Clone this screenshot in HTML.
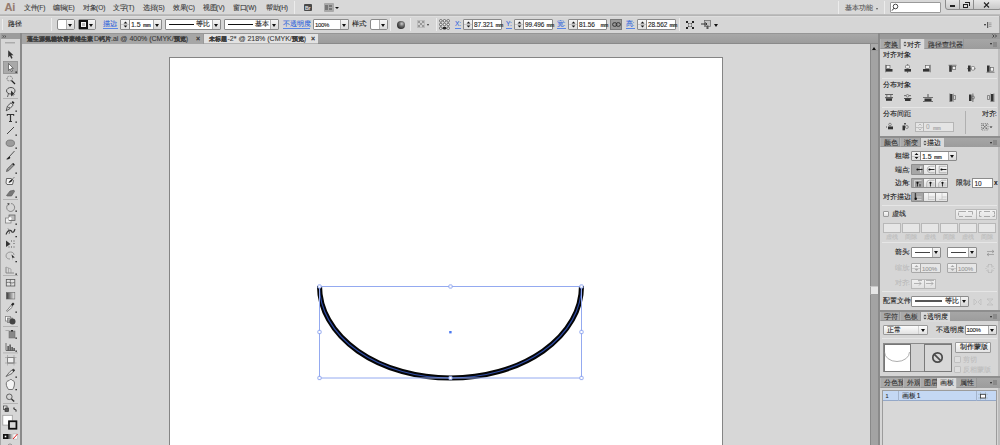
<!DOCTYPE html>
<html><head><meta charset="utf-8">
<style>
*{margin:0;padding:0;box-sizing:border-box}
html,body{width:1000px;height:445px;overflow:hidden;background:#d6d6d6;font-family:"Liberation Sans",sans-serif;font-size:8px;color:#333}
.a{position:absolute}
.t{position:absolute;white-space:nowrap;line-height:10px;font-size:6.5px;font-weight:normal;-webkit-text-stroke:0.1px currentColor}
.sep{position:absolute;width:1px;background:#b8b8b8;border-right:1px solid #ececec}
.box{position:absolute;background:#fff;border:1px solid #8c8c8c}
.dd{position:absolute;border:1px solid #8c8c8c;background:#fff}
.dd .ar{position:absolute;right:0;top:0;bottom:0;width:8px;border-left:1px solid #aaa;background:linear-gradient(#f4f4f4,#d8d8d8)}
.dd .ar:after{content:"";position:absolute;left:2px;top:3px;border-left:2px solid transparent;border-right:2px solid transparent;border-top:3px solid #111}
.sp{position:absolute;border:1px solid #8c8c8c;background:#fff}
.sp .ud{position:absolute;left:0;top:0;bottom:0;width:9px;border-right:1px solid #aaa;background:linear-gradient(#f4f4f4,#dcdcdc)}
.sp .ud:before{content:"";position:absolute;left:2px;top:1px;border-left:2px solid transparent;border-right:2px solid transparent;border-bottom:3px solid #222}
.sp .ud:after{content:"";position:absolute;left:2px;bottom:1px;border-left:2px solid transparent;border-right:2px solid transparent;border-top:3px solid #222}
.blue{color:#3468dc}
.tab{position:absolute;top:0;height:100%;background:#a8a8a8;border-right:1px solid #8f8f8f;color:#333}
.tabA{background:#d6d6d6}
</style></head><body>

<!-- MENU BAR -->
<div class="a" style="left:0;top:0;width:1000px;height:15px;background:#d8d8d8;border-bottom:1px solid #bdbdbd"></div>


<!-- MENU CONTENT -->
<div class="t" style="left:4.5px;top:1px;font-size:11px;line-height:13px;font-weight:bold;color:#957b6f;letter-spacing:-0.3px">Ai</div>
<div class="t" style="left:24px;top:3px;font-weight:normal;color:#3c3c3c"><span style="display:inline-block;width:2em">文件</span>(F)</div>
<div class="t" style="left:53px;top:3px;font-weight:normal;color:#3c3c3c"><span style="display:inline-block;width:2em">编辑</span>(E)</div>
<div class="t" style="left:83px;top:3px;font-weight:normal;color:#3c3c3c"><span style="display:inline-block;width:2em">对象</span>(O)</div>
<div class="t" style="left:113px;top:3px;font-weight:normal;color:#3c3c3c"><span style="display:inline-block;width:2em">文字</span>(T)</div>
<div class="t" style="left:143px;top:3px;font-weight:normal;color:#3c3c3c"><span style="display:inline-block;width:2em">选择</span>(S)</div>
<div class="t" style="left:173px;top:3px;font-weight:normal;color:#3c3c3c"><span style="display:inline-block;width:2em">效果</span>(C)</div>
<div class="t" style="left:203px;top:3px;font-weight:normal;color:#3c3c3c"><span style="display:inline-block;width:2em">视图</span>(V)</div>
<div class="t" style="left:233px;top:3px;font-weight:normal;color:#3c3c3c"><span style="display:inline-block;width:2em">窗口</span>(W)</div>
<div class="t" style="left:266px;top:3px;font-weight:normal;color:#3c3c3c"><span style="display:inline-block;width:2em">帮助</span>(H)</div>
<div class="sep" style="left:294px;top:1px;height:13px"></div>
<div class="a" style="left:304px;top:4px;width:8px;height:7px;background:#4a4a4a;border-radius:1px"></div>
<div class="t" style="left:305px;top:3px;font-size:5px;color:#ddd;font-weight:bold">Br</div>
<div class="a" style="left:324px;top:3px;width:10px;height:9px;background:#a9a9a9;border-radius:1px"></div>
<div class="a" style="left:325px;top:5px;width:3px;height:5px;background:#777"></div>
<div class="a" style="left:329px;top:5px;width:3px;height:2px;background:#777"></div>
<div class="a" style="left:329px;top:8px;width:3px;height:2px;background:#777"></div>
<div class="a" style="left:335px;top:7px;border-left:2px solid transparent;border-right:2px solid transparent;border-top:2px solid #111"></div>
<div class="sep" style="left:838px;top:1px;height:13px"></div>
<div class="t" style="left:845px;top:3px;color:#555;font-weight:normal"><span style="display:inline-block;width:4em">基本功能</span></div>
<div class="a" style="left:875.5px;top:7.5px;border-left:1.5px solid transparent;border-right:1.5px solid transparent;border-top:2px solid #555"></div>
<div class="sep" style="left:884px;top:1px;height:13px"></div>
<div class="box" style="left:890px;top:2px;width:51px;height:11px;border-color:#9a9a9a;border-radius:1px"></div>
<svg class="a" style="left:891px;top:3px" width="8" height="9" viewBox="0 0 8 9"><circle cx="4.5" cy="3.5" r="2.3" fill="none" stroke="#333" stroke-width="0.9"/><line x1="3" y1="5.2" x2="1" y2="7.6" stroke="#333" stroke-width="1"/></svg>
<div class="a" style="left:945px;top:-1px;width:56px;height:11px;background:linear-gradient(#e6e6e6,#c9c9c9);border:1px solid #8c8c8c;border-radius:0 0 2px 3px"></div>
<div class="a" style="left:959px;top:0;width:1px;height:10px;background:#8c8c8c"></div>
<div class="a" style="left:973px;top:0;width:1px;height:10px;background:#8c8c8c"></div>
<div class="a" style="left:950px;top:5px;width:5px;height:2px;background:#222"></div>
<div class="a" style="left:963px;top:4px;width:5px;height:4px;border:1px solid #222;background:#ddd"></div>
<div class="a" style="left:965px;top:2px;width:5px;height:4px;border:1px solid #222;border-bottom:none;border-left:none"></div>
<svg class="a" style="left:983px;top:2px" width="7" height="6"><path d="M1 0.5L6 5.5M6 0.5L1 5.5" stroke="#222" stroke-width="1.1"/></svg>

<!-- CONTROL BAR -->
<div class="a" style="left:0;top:15px;width:1000px;height:18px;background:#d6d6d6;border-top:1px solid #f0f0f0"></div>


<!-- CONTROL CONTENT -->
<div class="a" style="left:0;top:15px;width:1000px;height:1px;background:#b4b4b4"></div>
<div class="a" style="left:0;top:16px;width:1000px;height:1px;background:#dedede"></div>
<div class="sep" style="left:2px;top:19px;height:11px"></div>
<div class="t" style="left:8px;top:19px;color:#222"><span style="display:inline-block;width:2em">路径</span></div>
<div class="sep" style="left:51px;top:18px;height:13px"></div>
<div class="a" style="left:57px;top:19px;width:18px;height:11px;background:#fff;border:1px solid #8a8a8a;border-radius:2px"></div>
<div class="a" style="left:66px;top:20px;width:8px;height:9px;background:linear-gradient(#f6f6f6,#dadada);border-left:1px solid #b0b0b0"></div>
<div class="a" style="left:68px;top:23.5px;border-left:2px solid transparent;border-right:2px solid transparent;border-top:3px solid #111"></div>

<div class="a" style="left:78px;top:19px;width:18px;height:11px;background:#c8c8c8;border:1px solid #8a8a8a;border-radius:2px"></div>
<div class="a" style="left:87px;top:20px;width:8px;height:9px;background:linear-gradient(#f6f6f6,#dadada);border-left:1px solid #b0b0b0"></div>
<div class="a" style="left:89px;top:23.5px;border-left:2px solid transparent;border-right:2px solid transparent;border-top:3px solid #111"></div>
<div class="a" style="left:79px;top:20px;width:9px;height:9px;background:#111"></div><div class="a" style="left:81px;top:22px;width:5px;height:5px;border:1px solid #f4f4f4;background:#b8b8b8"></div>
<div class="t blue" style="left:102.5px;top:19px;"><span style="display:inline-block;width:2em">描边</span>:</div><div class="a" style="left:102.5px;top:28px;width:15px;height:0.8px;background:#5a86e8"></div>
<div class="a" style="left:120px;top:19px;width:42px;height:11px;background:#fff;border:1px solid #8a8a8a;border-radius:1px"></div>
<div class="a" style="left:121px;top:20px;width:9px;height:9px;background:linear-gradient(#f4f4f4,#e0e0e0);border-right:1px solid #8a8a8a"></div>
<div class="a" style="left:121px;top:24.0px;width:8px;height:1px;background:#c8c8c8"></div>
<svg class="a" style="left:121px;top:20px" width="9" height="9"><path d="M2.6 3.5L4.5 1.5L6.4 3.5Z M2.6 5.5L4.5 7.5L6.4 5.5Z" fill="#111"/></svg>
<div class="a" style="left:153px;top:20px;width:8px;height:9px;background:linear-gradient(#f4f4f4,#d8d8d8);border-left:1px solid #aaa"></div>
<div class="a" style="left:155px;top:23.5px;border-left:2px solid transparent;border-right:2px solid transparent;border-top:3px solid #111"></div>
<div class="t" style="left:131px;top:20.3px;color:#222;font-weight:normal;font-size:7px;letter-spacing:-0.1px">1.5</div>
<div class="t" style="left:143px;top:21px;color:#333;font-size:4.6px;font-weight:bold;letter-spacing:-0.45px">mm</div>
<div class="a" style="left:165px;top:19px;width:56px;height:11px;background:#fff;border:1px solid #8a8a8a;border-radius:1px"></div>
<div class="a" style="left:212px;top:20px;width:8px;height:9px;background:linear-gradient(#f6f6f6,#dadada);border-left:1px solid #b0b0b0"></div>
<div class="a" style="left:214px;top:23.5px;border-left:2px solid transparent;border-right:2px solid transparent;border-top:3px solid #111"></div>
<div class="a" style="left:169px;top:23.5px;width:25px;height:1.5px;background:#111"></div><div class="t" style="left:196px;top:19px;color:#222"><span style="display:inline-block;width:2em">等比</span></div>
<div class="a" style="left:224px;top:19px;width:55px;height:11px;background:#fff;border:1px solid #8a8a8a;border-radius:1px"></div>
<div class="a" style="left:270px;top:20px;width:8px;height:9px;background:linear-gradient(#f6f6f6,#dadada);border-left:1px solid #b0b0b0"></div>
<div class="a" style="left:272px;top:23.5px;border-left:2px solid transparent;border-right:2px solid transparent;border-top:3px solid #111"></div>
<div class="a" style="left:228px;top:23.5px;width:25px;height:1.5px;background:#111"></div><div class="t" style="left:255px;top:19px;color:#222"><span style="display:inline-block;width:2em">基本</span></div>
<div class="t blue" style="left:283px;top:19px;"><span style="display:inline-block;width:4em">不透明度</span>:</div><div class="a" style="left:283px;top:28px;width:27px;height:0.8px;background:#5a86e8"></div>
<div class="a" style="left:313px;top:19px;width:36px;height:11px;background:#fff;border:1px solid #8a8a8a;border-radius:1px"></div>
<div class="a" style="left:340px;top:20px;width:8px;height:9px;background:linear-gradient(#f6f6f6,#dadada);border-left:1px solid #b0b0b0"></div>
<div class="a" style="left:342px;top:23.5px;border-left:2px solid transparent;border-right:2px solid transparent;border-top:3px solid #111"></div>
<div class="t" style="left:315px;top:19.5px;color:#222;font-size:6px;font-weight:normal;letter-spacing:-0.3px">100%</div>
<div class="t" style="left:352px;top:19px;color:#222"><span style="display:inline-block;width:2em">样式</span>:</div>
<div class="a" style="left:370px;top:19px;width:18px;height:11px;background:#fff;border:1px solid #8a8a8a;border-radius:2px"></div>
<div class="a" style="left:379px;top:20px;width:8px;height:9px;background:linear-gradient(#f6f6f6,#dadada);border-left:1px solid #b0b0b0"></div>
<div class="a" style="left:381px;top:23.5px;border-left:2px solid transparent;border-right:2px solid transparent;border-top:3px solid #111"></div>

<div class="sep" style="left:390px;top:18px;height:13px"></div>
<div class="a" style="left:397px;top:20.5px;width:8px;height:8px;border-radius:50%;background:radial-gradient(circle at 60% 35%,#cfcfcf 0,#6a6a6a 35%,#111 90%)"></div>
<div class="sep" style="left:410px;top:18px;height:13px"></div>
<svg class="a" style="left:417px;top:20px" width="8" height="8" viewBox="0 0 8 8"><rect x="0.5" y="0.5" width="7" height="7" fill="#d0d0d0" stroke="#888" stroke-width="0.6" stroke-dasharray="1 1"/><rect x="1" y="1" width="2" height="2" fill="#999"/><rect x="5" y="1" width="2" height="2" fill="#999"/><rect x="3" y="3" width="2" height="2" fill="#999"/><rect x="1" y="5" width="2" height="2" fill="#999"/><rect x="5" y="5" width="2" height="2" fill="#999"/></svg>
<div class="a" style="left:426.5px;top:24px;border-left:1.5px solid transparent;border-right:1.5px solid transparent;border-top:2px solid #333"></div>
<div class="sep" style="left:436px;top:18px;height:13px"></div>
<svg class="a" style="left:439px;top:19px" width="11" height="11" viewBox="0 0 11 11"><g fill="#f0f0f0" stroke="#444" stroke-width="0.7"><circle cx="1.8" cy="1.8" r="1.3"/><circle cx="5.5" cy="1.8" r="1.3"/><circle cx="9.2" cy="1.8" r="1.3"/><circle cx="1.8" cy="5.5" r="1.3"/><circle cx="5.5" cy="5.5" r="1.3"/><circle cx="9.2" cy="5.5" r="1.3"/><circle cx="1.8" cy="9.2" r="1.3"/><circle cx="9.2" cy="9.2" r="1.3"/></g><path d="M3.1 1.8H4.2M6.8 1.8H7.9M3.1 9.2H4.2M6.8 9.2H7.9M1.8 3.1V4.2M1.8 6.8V7.9M9.2 3.1V4.2M9.2 6.8V7.9" stroke="#666" stroke-width="0.5"/><ellipse cx="5.5" cy="9.2" rx="1.8" ry="1.4" fill="#222"/></svg>
<div class="t blue" style="left:455px;top:19px;">X:</div><div class="a" style="left:455px;top:28px;width:6px;height:0.8px;background:#5a86e8"></div>
<div class="a" style="left:463px;top:19px;width:39px;height:11px;background:#fff;border:1px solid #8a8a8a;border-radius:1px"></div>
<div class="a" style="left:464px;top:20px;width:9px;height:9px;background:linear-gradient(#f4f4f4,#e0e0e0);border-right:1px solid #8a8a8a"></div>
<div class="a" style="left:464px;top:24.0px;width:8px;height:1px;background:#c8c8c8"></div>
<svg class="a" style="left:464px;top:20px" width="9" height="9"><path d="M2.6 3.5L4.5 1.5L6.4 3.5Z M2.6 5.5L4.5 7.5L6.4 5.5Z" fill="#111"/></svg>
<div class="t" style="left:474px;top:20.3px;color:#222;font-weight:normal;font-size:6.5px;letter-spacing:-0.1px">87.321</div>
<div class="t" style="left:495.5px;top:21px;color:#333;font-size:4.6px;font-weight:bold;letter-spacing:-0.45px">mm</div>
<div class="t blue" style="left:506px;top:19px;">Y:</div><div class="a" style="left:506px;top:28px;width:6px;height:0.8px;background:#5a86e8"></div>
<div class="a" style="left:514px;top:19px;width:39px;height:11px;background:#fff;border:1px solid #8a8a8a;border-radius:1px"></div>
<div class="a" style="left:515px;top:20px;width:9px;height:9px;background:linear-gradient(#f4f4f4,#e0e0e0);border-right:1px solid #8a8a8a"></div>
<div class="a" style="left:515px;top:24.0px;width:8px;height:1px;background:#c8c8c8"></div>
<svg class="a" style="left:515px;top:20px" width="9" height="9"><path d="M2.6 3.5L4.5 1.5L6.4 3.5Z M2.6 5.5L4.5 7.5L6.4 5.5Z" fill="#111"/></svg>
<div class="t" style="left:525px;top:20.3px;color:#222;font-weight:normal;font-size:6.5px;letter-spacing:-0.1px">99.496</div>
<div class="t" style="left:546.5px;top:21px;color:#333;font-size:4.6px;font-weight:bold;letter-spacing:-0.45px">mm</div>
<div class="t blue" style="left:557px;top:19px;"><span style="display:inline-block;width:1em">宽</span>:</div><div class="a" style="left:557px;top:28px;width:9px;height:0.8px;background:#5a86e8"></div>
<div class="a" style="left:568px;top:19px;width:39px;height:11px;background:#fff;border:1px solid #8a8a8a;border-radius:1px"></div>
<div class="a" style="left:569px;top:20px;width:9px;height:9px;background:linear-gradient(#f4f4f4,#e0e0e0);border-right:1px solid #8a8a8a"></div>
<div class="a" style="left:569px;top:24.0px;width:8px;height:1px;background:#c8c8c8"></div>
<svg class="a" style="left:569px;top:20px" width="9" height="9"><path d="M2.6 3.5L4.5 1.5L6.4 3.5Z M2.6 5.5L4.5 7.5L6.4 5.5Z" fill="#111"/></svg>
<div class="t" style="left:579px;top:20.3px;color:#222;font-weight:normal;font-size:6.5px;letter-spacing:-0.1px">81.56</div>
<div class="t" style="left:600.5px;top:21px;color:#333;font-size:4.6px;font-weight:bold;letter-spacing:-0.45px">mm</div>
<div class="a" style="left:610px;top:19px;width:12px;height:11px;background:#9a9a9a;border:1px solid #7a7a7a"></div>
<svg class="a" style="left:611.5px;top:22px" width="9" height="5" viewBox="0 0 9 5"><rect x="0.6" y="0.7" width="4.2" height="3.6" rx="1.8" fill="none" stroke="#333" stroke-width="1"/><rect x="4.2" y="0.7" width="4.2" height="3.6" rx="1.8" fill="none" stroke="#333" stroke-width="1"/></svg>
<div class="t blue" style="left:626px;top:19px;"><span style="display:inline-block;width:1em">高</span>:</div><div class="a" style="left:626px;top:28px;width:9px;height:0.8px;background:#5a86e8"></div>
<div class="a" style="left:637px;top:19px;width:39px;height:11px;background:#fff;border:1px solid #8a8a8a;border-radius:1px"></div>
<div class="a" style="left:638px;top:20px;width:9px;height:9px;background:linear-gradient(#f4f4f4,#e0e0e0);border-right:1px solid #8a8a8a"></div>
<div class="a" style="left:638px;top:24.0px;width:8px;height:1px;background:#c8c8c8"></div>
<svg class="a" style="left:638px;top:20px" width="9" height="9"><path d="M2.6 3.5L4.5 1.5L6.4 3.5Z M2.6 5.5L4.5 7.5L6.4 5.5Z" fill="#111"/></svg>
<div class="t" style="left:648px;top:20.3px;color:#222;font-weight:normal;font-size:6.5px;letter-spacing:-0.1px">28.562</div>
<div class="t" style="left:669.5px;top:21px;color:#333;font-size:4.6px;font-weight:bold;letter-spacing:-0.45px">mm</div>
<div class="sep" style="left:679px;top:18px;height:13px"></div>
<svg class="a" style="left:685.5px;top:20.5px" width="8" height="8" viewBox="0 0 8 8"><g stroke="#222" stroke-width="0.9" fill="none"><path d="M1.5 1.5L2.8 2.8M6.5 1.5L5.2 2.8M1.5 6.5L2.8 5.2M6.5 6.5L5.2 5.2"/><path d="M2.5 2.5H5.5V5.5H2.5Z" stroke-width="0.6" stroke="#666"/></g><g fill="#222"><rect x="0" y="0" width="2" height="2"/><rect x="6" y="0" width="2" height="2"/><rect x="0" y="6" width="2" height="2"/><rect x="6" y="6" width="2" height="2"/></g></svg>
<svg class="a" style="left:701px;top:20px" width="10" height="9" viewBox="0 0 10 9"><rect x="3.5" y="0.5" width="6" height="6" fill="#c4c4c4" stroke="#666" stroke-width="0.7"/><path d="M0 4H5.5M4.3 2.6L6 4L4.3 5.4" stroke="#222" stroke-width="0.9" fill="none"/><rect x="5.5" y="5.5" width="2" height="3.5" fill="#555"/></svg>
<div class="a" style="left:714px;top:23.5px;border-left:2px solid transparent;border-right:2px solid transparent;border-top:3px solid #111"></div>
<div class="a" style="left:984px;top:24px;border-left:1.5px solid transparent;border-right:1.5px solid transparent;border-top:2px solid #222"></div>
<svg class="a" style="left:987px;top:22px" width="5" height="6" viewBox="0 0 5 6"><path d="M0.7 0V6" stroke="#444" stroke-width="1"/><g stroke="#888" stroke-width="0.7"><path d="M2 1H4.5M2 2.7H4.5M2 4.4H4.5"/></g></svg>
<div class="a" style="left:999px;top:16px;width:1px;height:17px;background:#a8a8a8"></div>

<!-- TOOLS PANEL -->
<div class="a" style="left:0;top:33px;width:20px;height:412px;background:#d6d6d6"></div>
<div class="a" style="left:0;top:33px;width:20px;height:6px;background:#9c9c9c"></div>
<div class="a" style="left:20px;top:33px;width:2px;height:412px;background:#8a8a8a"></div>


<!-- TOOL ICONS -->
<svg class="a" style="left:0;top:0" width="22" height="445" viewBox="0 0 22 445">
<rect x="0" y="33" width="1" height="412" fill="#a8a8a8"/>
<path d="M2.5 35.5L4 36.5L2.5 37.5M4.5 35.5L6 36.5L4.5 37.5" fill="none" stroke="#333" stroke-width="0.6"/>
<rect x="5" y="42" width="10" height="1.5" fill="#ababab"/>
<!-- selection -->
<path d="M8.2 50.3V57.5L9.9 55.8L11.3 58.7L12.6 58L11.2 55.2H13.5Z" fill="#333"/>
<!-- direct sel active bg -->
<rect x="3.5" y="61.5" width="14" height="12" fill="#a9a9a9" stroke="#8e8e8e" stroke-width="0.8"/>
<path d="M8.5 63.5V70.5L10.1 68.9L11.4 71.6L12.5 71L11.2 68.4H13.3Z" fill="#fff" stroke="#333" stroke-width="0.6"/>
<rect x="15.5" y="71.5" width="1.3" height="1.3" fill="#111"/>
<!-- magic wand -->
<g fill="none" stroke="#666" stroke-width="0.8"><path d="M7 77.5L9 76L11.5 76.5L12.5 78.5L11.5 80.5L9 81L7 80Z" stroke-dasharray="1 0.7"/></g>
<path d="M11.5 80.5L15 84" stroke="#222" stroke-width="1.3"/>
<!-- lasso -->
<path d="M6.5 91C6.5 88.5 9 87.5 11 87.5C13.5 87.5 15 89 15 91C15 93 13 94 11 94C9 94 6.5 93 6.5 91Z" fill="none" stroke="#444" stroke-width="0.9"/>
<path d="M11 90.5V96.5L12.3 95.2L14 96.5L12.7 94.5H15Z" fill="#333"/>
<path d="M8.5 93.5L7.5 97" stroke="#444" stroke-width="0.8"/>
<rect x="3" y="98" width="15" height="0.8" fill="#aaa"/>
<!-- pen -->
<path d="M6.2 110.8L7.5 106L11 102.8L13.2 105L10 108.5Z" fill="#ddd" stroke="#333" stroke-width="0.8"/>
<path d="M11.5 102.2L12.8 101L14.5 102.7L13.3 104Z" fill="#222"/>
<circle cx="9" cy="107.5" r="0.7" fill="#333"/>
<!-- type -->
<path d="M7 114.5H14M10.5 114.5V121.5M9 121.5H12" stroke="#333" stroke-width="1.2" fill="none"/>
<rect x="6.8" y="114" width="0.9" height="2" fill="#333"/><rect x="13.3" y="114" width="0.9" height="2" fill="#333"/>
<!-- line -->
<path d="M7 134L14 127" stroke="#333" stroke-width="0.9"/>
<!-- ellipse -->
<ellipse cx="10.3" cy="143.2" rx="4.2" ry="3.2" fill="#9c9c9c" stroke="#666" stroke-width="0.7"/>
<!-- brush -->
<path d="M14.5 151L9 157" stroke="#333" stroke-width="0.8"/>
<path d="M6 159.3C7 158.8 8 157 9.5 156.5C10.5 157 10.5 158 9.5 158.8C8.5 159.5 7 159.6 6 159.3Z" fill="#222"/>
<!-- pencil -->
<path d="M6.5 171.5L7.2 169L12.5 163.8L14 165.3L8.8 170.6Z" fill="#999" stroke="#444" stroke-width="0.7"/>
<path d="M12.2 164L13.3 163L14.8 164.5L13.8 165.5Z" fill="#222"/>
<!-- blob brush -->
<path d="M6.5 178.5H11L13.5 180.5L12.5 184.5H7L6 183Z" fill="#f2f2f2" stroke="#444" stroke-width="0.8"/>
<path d="M8.5 182.5C9 181 11 179.5 12.5 179C12.8 180.5 11.5 182 9.5 182.8Z" fill="#222"/>
<path d="M12.5 179L14.5 177" stroke="#444" stroke-width="0.6"/>
<!-- eraser -->
<path d="M6.5 195.5L10 191L14 190.2L14.5 191.5L11.5 196H7Z" fill="#777" stroke="#555" stroke-width="0.6"/>
<rect x="3" y="199" width="15" height="0.8" fill="#aaa"/>
<!-- rotate -->
<path d="M8 204.5A4 4 0 1 0 11 203.5" fill="none" stroke="#888" stroke-width="1"/>
<path d="M7 203.5L9.5 203L9 205.5Z" fill="#444"/>
<!-- scale -->
<rect x="5.5" y="218" width="5.5" height="5" fill="#eee" stroke="#777" stroke-width="0.7"/>
<rect x="9" y="215" width="6" height="5.5" fill="#bbb" stroke="#555" stroke-width="0.7"/>
<circle cx="10" cy="218.5" r="1.5" fill="#fff"/>
<!-- warp -->
<path d="M6 234.5C7 232 9 230 11 230.5C12 231 11.5 233 13.5 232C14.5 231 15 229 15 229" fill="none" stroke="#333" stroke-width="1.1"/>
<path d="M8 228.5L10 231L9 234" fill="none" stroke="#555" stroke-width="0.8"/>
<!-- free transform -->
<path d="M6 240.5L10.5 244L6 247Z" fill="#333"/>
<g fill="#555"><rect x="11" y="240.5" width="1" height="1"/><rect x="13.5" y="240.5" width="1" height="1"/><rect x="13.5" y="243" width="1" height="1"/><rect x="8.5" y="246.5" width="1" height="1"/><rect x="11" y="246.5" width="1" height="1"/><rect x="13.5" y="246.5" width="1" height="1"/></g>
<!-- shape builder -->
<path d="M6 256C6 253.5 8 252 10.5 252C13 252 14 253.5 14 255" fill="none" stroke="#888" stroke-width="0.8"/>
<path d="M6 256C6 258 8 259 10 259" fill="none" stroke="#888" stroke-width="0.8"/>
<path d="M11.5 254.5L14.8 257.5L12.5 257.8L13 260.8Z" fill="#222"/>
<!-- perspective -->
<path d="M6 267V273H14" fill="none" stroke="#777" stroke-width="0.8"/>
<path d="M6 267L11 269V273M8.5 268V273" fill="none" stroke="#999" stroke-width="0.7"/>
<rect x="3" y="275" width="15" height="0.8" fill="#aaa"/>
<!-- mesh -->
<rect x="6.3" y="279.5" width="8.5" height="6.5" fill="#e0e0e0" stroke="#555" stroke-width="0.8"/>
<path d="M6.5 282.5C9 281.5 11 284 14.5 282.5M10.5 279.5C9.5 282 11.5 284 10.5 286" fill="none" stroke="#555" stroke-width="0.7"/>
<!-- gradient -->
<defs><linearGradient id="gr" x1="0" x2="1"><stop offset="0" stop-color="#333"/><stop offset="1" stop-color="#eee"/></linearGradient></defs>
<rect x="6.3" y="292.5" width="8.5" height="6.5" fill="url(#gr)" stroke="#666" stroke-width="0.6"/>
<!-- eyedropper -->
<path d="M6.5 311L11 305.5L12.5 307L7.3 311.5Z" fill="#eee" stroke="#444" stroke-width="0.6"/>
<path d="M11 304.5L13 302.5L14.5 304L12.5 306Z" fill="#222"/>
<!-- blend -->
<rect x="5.5" y="316.5" width="5" height="4.5" fill="#fff" stroke="#777" stroke-width="0.7"/>
<rect x="7.5" y="318" width="5" height="4.5" fill="#aaa" stroke="#777" stroke-width="0.7"/>
<circle cx="12.5" cy="321.5" r="3" fill="#444"/>
<rect x="3" y="326" width="15" height="0.8" fill="#aaa"/>
<!-- symbol sprayer -->
<rect x="9" y="331" width="6" height="7" fill="#888" stroke="#666" stroke-width="0.5"/>
<rect x="11" y="330" width="2" height="1.5" fill="#333"/>
<path d="M5.5 330.5H9" stroke="#aaa" stroke-width="1"/>
<!-- graph -->
<path d="M6 343V350.5H15" fill="none" stroke="#444" stroke-width="0.7"/>
<g fill="#333"><rect x="7.5" y="346" width="1.2" height="4.5"/><rect x="9.5" y="344.5" width="1.2" height="6"/><rect x="11.5" y="347" width="1.2" height="3.5"/><rect x="13.5" y="348" width="1.2" height="2.5"/></g>
<rect x="3" y="352.5" width="15" height="0.8" fill="#aaa"/>
<!-- artboard -->
<rect x="7.5" y="357.5" width="6.5" height="5.5" fill="#eee" stroke="#444" stroke-width="0.8"/>
<path d="M5 357.5H16.5M5 363H16.5M7.5 355V365.5M14 355V365.5" stroke="#999" stroke-width="0.6"/>
<!-- slice -->
<path d="M6 376.5L10 371.5L13.5 369L14.5 370L12 373.5Z" fill="#ddd" stroke="#444" stroke-width="0.7"/>
<path d="M12 370L13.5 369L15 370.5L13.5 372Z" fill="#333"/>
<!-- hand -->
<path d="M7 387C6 385 6 382.5 7 381.5C8 380.5 9 381 9.5 380C10.5 379 12 379.5 12.5 380.5C13.5 380.5 14.5 381.5 14.5 383C14.5 386 13.5 388.5 12.5 389.5H8.5Z" fill="#f4f4f4" stroke="#555" stroke-width="0.8"/>
<!-- zoom -->
<circle cx="9.3" cy="396.8" r="2.8" fill="none" stroke="#555" stroke-width="0.9"/>
<path d="M11.5 399L14.2 401.5" stroke="#333" stroke-width="1.4"/>
<rect x="3" y="403" width="15" height="0.8" fill="#aaa"/>
<!-- default/swap -->
<rect x="3.5" y="406" width="3.5" height="3.5" fill="#fff" stroke="#333" stroke-width="0.7"/>
<rect x="5" y="408" width="3.5" height="3.5" fill="#555" stroke="#333" stroke-width="0.7"/>
<path d="M14 407L13 408.5L15 408.5Z" fill="#333"/><path d="M14 408V409.5H16V410.5" fill="none" stroke="#333" stroke-width="0.8"/><path d="M15 410.5L17 410.5L16 412Z" fill="#333"/>
<!-- fill/stroke -->
<rect x="2.8" y="415.3" width="9.5" height="9.8" fill="#fff" stroke="#9a9a9a" stroke-width="0.8"/>
<rect x="8.2" y="420.5" width="9" height="9" fill="#999"/>
<rect x="9" y="421.3" width="7.4" height="7.4" fill="#d8d8d8" stroke="#111" stroke-width="1.7"/>
<!-- modes -->
<rect x="3" y="434" width="5" height="5" fill="#111"/><rect x="4.7" y="435.7" width="1.6" height="1.6" fill="#fff"/>
<rect x="8" y="434" width="5" height="5" fill="url(#gr)"/>
<rect x="13" y="434" width="4.5" height="5" fill="#fff" stroke="#999" stroke-width="0.4"/><path d="M13 439L17.5 434" stroke="#e02020" stroke-width="1"/>
<path d="M8 445A2.5 2.5 0 0 1 12 445" fill="none" stroke="#666" stroke-width="0.6"/>
<rect x="15.5" y="121.5" width="1.3" height="1.3" fill="#111"/><rect x="15.5" y="134.5" width="1.3" height="1.3" fill="#111"/><rect x="15.5" y="147.5" width="1.3" height="1.3" fill="#111"/><rect x="15.5" y="172.5" width="1.3" height="1.3" fill="#111"/><rect x="15.5" y="196.5" width="1.3" height="1.3" fill="#111"/><rect x="15.5" y="210.5" width="1.3" height="1.3" fill="#111"/><rect x="15.5" y="223.5" width="1.3" height="1.3" fill="#111"/><rect x="15.5" y="236.0" width="1.3" height="1.3" fill="#111"/><rect x="15.5" y="261.0" width="1.3" height="1.3" fill="#111"/><rect x="15.5" y="273.5" width="1.3" height="1.3" fill="#111"/><rect x="15.5" y="311.5" width="1.3" height="1.3" fill="#111"/><rect x="15.5" y="337.5" width="1.3" height="1.3" fill="#111"/><rect x="15.5" y="350.5" width="1.3" height="1.3" fill="#111"/><rect x="15.5" y="376.5" width="1.3" height="1.3" fill="#111"/><rect x="15.5" y="389.0" width="1.3" height="1.3" fill="#111"/><rect x="15.5" y="110.5" width="1.3" height="1.3" fill="#111"/>
</svg>

<!-- TAB BAR -->
<div class="a" style="left:22px;top:33px;width:856px;height:11px;background:linear-gradient(#a8a8a8,#9c9c9c);border-top:1px solid #969696;border-bottom:1px solid #8a8a8a"></div>
<div class="a" style="left:22px;top:34px;width:182px;height:10px;background:#a6a6a6;border-right:1px solid #9a9a9a"></div>
<div class="t" style="left:27px;top:34px;color:#3a3a3a;font-weight:normal;font-size:7px"><span style="display:inline-block;width:67px;font-weight:bold;font-size:6.1px"><span style="display:inline-block;width:11em">蓬生源氨糖软骨素维生素</span></span><span style="display:inline-block;width:5px">D</span><span style="display:inline-block;width:12px;font-weight:bold;font-size:6.1px"><span style="display:inline-block;width:2em">钙片</span></span>.ai @ 400% (CMYK/<span style="display:inline-block;width:12px;font-weight:bold;font-size:6.1px"><span style="display:inline-block;width:2em">预览</span></span>)</div>
<div class="t" style="left:196px;top:34px;color:#333;font-weight:bold;font-size:7px">×</div>
<div class="a" style="left:204px;top:34px;width:114px;height:9px;background:#e2e2e2"></div>
<div class="a" style="left:204px;top:43px;width:114px;height:1px;background:#b4b4b4"></div>
<div class="t" style="left:209px;top:34px;color:#3a3a3a;font-weight:normal;font-size:7px"><span style="display:inline-block;width:18.5px;font-weight:bold;font-size:6.1px"><span style="display:inline-block;width:3em">未标题</span></span>-2* @ 218% (CMYK/<span style="display:inline-block;width:12px;font-weight:bold;font-size:6.1px"><span style="display:inline-block;width:2em">预览</span></span>)</div>
<div class="t" style="left:311px;top:34px;color:#333;font-weight:bold;font-size:7px">×</div>

<!-- CANVAS -->
<div class="a" style="left:22px;top:44px;width:848px;height:401px;background:#d7d7d7"></div>
<div class="a" style="left:169px;top:57px;width:554px;height:400px;background:#fff;border-left:1px solid #858585;border-top:1px solid #858585;border-right:1px solid #858585"></div>


<!-- ARC -->
<svg class="a" style="left:0;top:0" width="870" height="445" viewBox="0 0 870 445">
<path d="M319.5 286A131 92 0 0 0 581.5 286" fill="none" stroke="#050505" stroke-width="5.1"/>
<path d="M319.5 286A131 92 0 0 0 581.5 286" fill="none" stroke="#2e4ca6" stroke-width="1.15"/>
<rect x="319.5" y="286.5" width="262" height="91.5" fill="none" stroke="#94aaf0" stroke-width="1"/>
<g fill="#fff" stroke="#8aa2ee" stroke-width="0.9"><rect x="317.9" y="284.9" width="3.2" height="3.2" rx="0.6"/><rect x="448.9" y="284.9" width="3.2" height="3.2" rx="0.6"/><rect x="579.9" y="284.9" width="3.2" height="3.2" rx="0.6"/><rect x="317.9" y="330.4" width="3.2" height="3.2" rx="0.6"/><rect x="579.9" y="330.4" width="3.2" height="3.2" rx="0.6"/><rect x="317.9" y="376.4" width="3.2" height="3.2" rx="0.6"/><rect x="448.9" y="376.4" width="3.2" height="3.2" rx="0.6"/><rect x="579.9" y="376.4" width="3.2" height="3.2" rx="0.6"/></g>
<rect x="449.2" y="331" width="2.4" height="2.4" fill="#4a78f0"/>
</svg>

<!-- SCROLLBAR -->
<div class="a" style="left:870px;top:44px;width:9px;height:401px;background:#a3a3a3;border-left:1px solid #888"></div>
<div class="a" style="left:871px;top:44px;width:7px;height:7px;background:#ababab;border-bottom:1px solid #9a9a9a"></div>
<div class="a" style="left:872px;top:47px;border-left:2.5px solid transparent;border-right:2.5px solid transparent;border-bottom:3px solid #111"></div>
<div class="a" style="left:870px;top:286px;width:9px;height:9px;background:#e6e6e6;border:1px solid #a0a0a0;border-top-color:#c8c8c8"></div>
<div class="a" style="left:878px;top:33px;width:2px;height:412px;background:#8a8a8a"></div>

<!-- RIGHT PANEL -->
<div class="a" style="left:880px;top:33px;width:120px;height:412px;background:#d6d6d6"></div>
<!-- PANEL1 -->
<div class="a" style="left:880px;top:33px;width:120px;height:6px;background:#9a9a9a;border-top:1px solid #8a8a8a"></div>
<svg class="a" style="left:992px;top:34px" width="6" height="4"><path d="M0.5 0.5L2 2L0.5 3.5M3 0.5L4.5 2L3 3.5" fill="none" stroke="#222" stroke-width="0.7"/></svg>
<div class="a" style="left:998px;top:39px;width:2px;height:406px;background:#bdbdbd"></div>
<div class="a" style="left:880px;top:39px;width:120px;height:10px;background:linear-gradient(#a6a6a6,#9c9c9c)"></div>
<div class="a" style="left:880px;top:39px;width:20px;height:10px;background:#a9a9a9;border:1px solid #969696;border-left-color:#b4b4b4;border-top:none"></div>
<div class="t" style="left:883.5px;top:39.5px;color:#333"><span style="display:inline-block;width:2em">变换</span></div>
<div class="a" style="left:901px;top:39px;width:23px;height:11px;background:#dadada"></div>
<svg class="a" style="left:903px;top:41.0px" width="4" height="6"><path d="M0.3 2.3L2 0.5L3.7 2.3ZM0.3 3.7L2 5.5L3.7 3.7Z" fill="#444"/></svg>
<div class="t" style="left:907px;top:39.5px;color:#222"><span style="display:inline-block;width:2em">对齐</span></div>
<div class="a" style="left:924px;top:39px;width:40px;height:10px;background:#a9a9a9;border:1px solid #969696;border-left-color:#b4b4b4;border-top:none"></div>
<div class="t" style="left:927.5px;top:39.5px;color:#333"><span style="display:inline-block;width:5em">路径查找器</span></div>
<div class="a" style="left:990px;top:43.0px;border-left:1.5px solid transparent;border-right:1.5px solid transparent;border-top:2px solid #222"></div>
<div class="a" style="left:993px;top:41.5px;width:4px;height:5px;background:#8a8a8a"></div>
<div class="t" style="left:883px;top:50px;color:#222;"><span style="display:inline-block;width:4em">对齐对象</span>:</div>
<div class="a" style="left:882px;top:78px;width:115px;height:1px;background:#bcbcbc;border-bottom:1px solid #e6e6e6"></div>
<div class="t" style="left:883px;top:80px;color:#222;"><span style="display:inline-block;width:4em">分布对象</span>:</div>
<div class="a" style="left:882px;top:107px;width:115px;height:1px;background:#bcbcbc;border-bottom:1px solid #e6e6e6"></div>
<div class="t" style="left:883px;top:109px;color:#222;"><span style="display:inline-block;width:4em">分布间距</span>:</div>
<div class="a" style="left:965px;top:111px;width:1px;height:23px;background:#b0b0b0"></div>
<div class="t" style="left:982px;top:109px;color:#222;"><span style="display:inline-block;width:2em">对齐</span>:</div>
<div class="a" style="left:880px;top:136px;width:120px;height:2px;background:#8e8e8e"></div>
<svg class="a" style="left:880px;top:60px" width="120" height="76" viewBox="880 60 120 76">
<g fill="#333">
<!-- row1 -->
<rect x="885.3" y="64.8" width="0.8" height="7.5" fill="#666"/><rect x="886.5" y="65.3" width="3.5" height="3" fill="#f0f0f0" stroke="#555" stroke-width="0.6"/><rect x="886" y="69" width="6.5" height="2.6"/>
<rect x="907.3" y="64" width="0.8" height="9" fill="#666"/><rect x="905.5" y="65.3" width="4" height="3" rx="1" fill="#f0f0f0" stroke="#555" stroke-width="0.6"/><rect x="904.5" y="69" width="6.5" height="2.6"/>
<rect x="929.8" y="64.8" width="0.8" height="7.5" fill="#666"/><rect x="925.5" y="65.3" width="3.8" height="3" fill="#f0f0f0" stroke="#555" stroke-width="0.6"/><rect x="923" y="69" width="6.5" height="2.6"/>
<rect x="948.5" y="64.8" width="8" height="0.8" fill="#666"/><rect x="949.2" y="65.5" width="2.6" height="6.3"/><rect x="952.5" y="66.3" width="3.2" height="3.3" fill="#f0f0f0" stroke="#555" stroke-width="0.6"/>
<rect x="967" y="68.3" width="8.5" height="0.8" fill="#666"/><rect x="968" y="65.5" width="2.6" height="6"/><rect x="971.3" y="66.5" width="3.3" height="3.6" rx="1" fill="#f0f0f0" stroke="#555" stroke-width="0.6"/>
<rect x="986.5" y="71.8" width="8" height="0.8" fill="#666"/><rect x="987" y="65.5" width="2.6" height="6.3"/><rect x="990.3" y="67.5" width="3.3" height="3.6" fill="#f0f0f0" stroke="#555" stroke-width="0.6"/>
<!-- row2 -->
<rect x="885" y="94" width="8" height="0.9" fill="#555"/><rect x="886" y="95.5" width="1.5" height="1" fill="#555"/><rect x="890" y="95.5" width="1.5" height="1" fill="#555"/><rect x="885" y="97.3" width="8" height="0.9"/><rect x="886" y="98.3" width="6" height="2.5"/>
<rect x="904" y="95.3" width="2" height="0.8" fill="#555"/><rect x="909" y="95.3" width="2" height="0.8" fill="#555"/><circle cx="907.5" cy="95.8" r="1.3" fill="none" stroke="#555" stroke-width="0.6"/><rect x="904" y="98" width="7.5" height="0.8"/><rect x="905" y="98.5" width="5.5" height="2.5"/>
<rect x="927.5" y="94" width="1" height="3" fill="#555"/><rect x="923" y="97" width="10" height="0.8" fill="#555"/><rect x="924.5" y="98.5" width="7" height="2.5"/><rect x="923" y="101" width="10" height="0.8" fill="#555"/>
<rect x="950" y="94" width="2.5" height="7.5"/><rect x="949.5" y="93.5" width="0.8" height="8.5" fill="#666"/><path d="M953.5 95.5H955.5V99.5H953.5Z" fill="none" stroke="#555" stroke-width="0.6"/><rect x="953" y="93.5" width="0.6" height="8.5" fill="#888"/>
<rect x="969" y="94.5" width="2.5" height="6.5"/><rect x="972.5" y="93.5" width="0.8" height="8.5" fill="#555"/><circle cx="973" cy="97.5" r="1.5" fill="none" stroke="#555" stroke-width="0.6"/>
<rect x="991" y="94" width="2.5" height="7.5"/><rect x="993.5" y="93.5" width="0.8" height="8.5" fill="#666"/><path d="M987.5 95.5H989.5V99.5H987.5Z" fill="none" stroke="#555" stroke-width="0.6"/><rect x="990" y="93.5" width="0.6" height="8.5" fill="#888"/>
<!-- row3 -->
<rect x="886" y="126.5" width="1" height="1" fill="#555"/><circle cx="890" cy="124.5" r="1.3" fill="none" stroke="#555" stroke-width="0.6"/><rect x="888" y="126.5" width="5" height="2.8"/>
<rect x="902.5" y="125.5" width="2.5" height="4.8"/><rect x="904" y="123" width="2" height="1.5" fill="#555"/><circle cx="906.8" cy="127" r="1.5" fill="none" stroke="#555" stroke-width="0.6"/>
<!-- grid -->
<rect x="981.5" y="123.5" width="6.5" height="6.5" fill="none" stroke="#555" stroke-width="0.6" stroke-dasharray="1 0.8"/>
<rect x="982.5" y="124.5" width="1.5" height="1.5" fill="#777"/><rect x="985.5" y="124.5" width="1.5" height="1.5" fill="#777"/><rect x="984" y="126" width="1.5" height="1.5" fill="#777"/><rect x="982.5" y="127.5" width="1.5" height="1.5" fill="#777"/><rect x="985.5" y="127.5" width="1.5" height="1.5" fill="#777"/>
<path d="M989.5 126.5H992.5L991 128Z" fill="#222"/>
</g></svg>
<div class="a" style="left:915px;top:122px;width:39px;height:10px;background:#e4e4e4;border:1px solid #b5b5b5"></div>
<div class="a" style="left:915px;top:122px;width:9px;height:10px;border:1px solid #b5b5b5"></div>
<div class="a" style="left:916px;top:126.5px;width:7px;height:1px;background:#c0c0c0"></div>
<svg class="a" style="left:917px;top:123px" width="6" height="8"><path d="M1.5 2.5L3 1L4.5 2.5M1.5 5.5L3 7L4.5 5.5" fill="none" stroke="#999" stroke-width="0.6"/></svg>
<div class="t" style="left:926px;top:122px;color:#aaa;font-size:6.5px">0</div>
<div class="t" style="left:933px;top:123.5px;color:#aaa;font-size:4.6px;font-weight:bold;letter-spacing:-0.45px">mm</div>
<!-- /PANEL1 -->
<!-- PANEL2 -->
<div class="a" style="left:880px;top:138px;width:120px;height:9px;background:linear-gradient(#a6a6a6,#9c9c9c)"></div>
<div class="a" style="left:880px;top:138px;width:20px;height:9px;background:#a9a9a9;border:1px solid #969696;border-left-color:#b4b4b4;border-top:none"></div>
<div class="t" style="left:883.5px;top:138.0px;color:#333"><span style="display:inline-block;width:2em">颜色</span></div>
<div class="a" style="left:900px;top:138px;width:21px;height:9px;background:#a9a9a9;border:1px solid #969696;border-left-color:#b4b4b4;border-top:none"></div>
<div class="t" style="left:903.5px;top:138.0px;color:#333"><span style="display:inline-block;width:2em">渐变</span></div>
<div class="a" style="left:921px;top:138px;width:23px;height:10px;background:#dadada"></div>
<svg class="a" style="left:923px;top:139.5px" width="4" height="6"><path d="M0.3 2.3L2 0.5L3.7 2.3ZM0.3 3.7L2 5.5L3.7 3.7Z" fill="#444"/></svg>
<div class="t" style="left:927px;top:138.0px;color:#222"><span style="display:inline-block;width:2em">描边</span></div>
<div class="a" style="left:990px;top:141.5px;border-left:1.5px solid transparent;border-right:1.5px solid transparent;border-top:2px solid #222"></div>
<div class="a" style="left:993px;top:140.0px;width:4px;height:5px;background:#8a8a8a"></div>
<div class="t" style="left:895px;top:151px;color:#222;"><span style="display:inline-block;width:2em">粗细</span>:</div>
<div class="a" style="left:911px;top:151px;width:46px;height:10px;background:#fff;border:1px solid #8a8a8a;border-radius:1px"></div>
<div class="a" style="left:912px;top:152px;width:9px;height:8px;background:linear-gradient(#f4f4f4,#e0e0e0);border-right:1px solid #8a8a8a"></div>
<div class="a" style="left:912px;top:155.5px;width:8px;height:1px;background:#c8c8c8"></div>
<svg class="a" style="left:912px;top:152px" width="9" height="8"><path d="M2.6 3.0L4.5 1.0L6.4 3.0Z M2.6 5.0L4.5 7.0L6.4 5.0Z" fill="#111"/></svg>
<div class="a" style="left:948px;top:152px;width:8px;height:8px;background:linear-gradient(#f4f4f4,#d8d8d8);border-left:1px solid #aaa"></div>
<div class="a" style="left:950px;top:155.0px;border-left:2px solid transparent;border-right:2px solid transparent;border-top:3px solid #111"></div>
<div class="t" style="left:922px;top:151.8px;color:#222;font-weight:normal;font-size:7px;letter-spacing:-0.1px">1.5</div>
<div class="t" style="left:934px;top:152.5px;color:#333;font-size:4.6px;font-weight:bold;letter-spacing:-0.45px">mm</div>
<div class="t" style="left:895px;top:164.5px;color:#222;"><span style="display:inline-block;width:2em">端点</span>:</div>
<div class="a" style="left:911px;top:164px;width:37px;height:10.5px;background:#8e8e8e;border-radius:1px"></div>
<div class="a" style="left:912px;top:165px;width:11px;height:8.5px;background:#a6a6a6"></div>
<svg class="a" style="left:912px;top:165px" width="12" height="9"><path d="M8.5 1.5V7.5M8.5 2H10.5" fill="none" stroke="#e8e8e8" stroke-width="0.8"/><path d="M5 4.5H10.5" stroke="#111" stroke-width="0.9"/><circle cx="5.5" cy="4.5" r="1.1" fill="#111"/></svg>
<div class="a" style="left:924px;top:165px;width:11px;height:8.5px;background:linear-gradient(#f6f6f6,#e2e2e2)"></div>
<svg class="a" style="left:925px;top:165px" width="11" height="9"><path d="M9.5 1.2H5.5A3.3 3.3 0 0 0 5.5 7.8H9.5" fill="none" stroke="#999" stroke-width="0.7"/><path d="M4 4.5H9.5" stroke="#111" stroke-width="0.9"/><circle cx="4.5" cy="4.5" r="1.1" fill="#111"/></svg>
<div class="a" style="left:936px;top:165px;width:11px;height:8.5px;background:linear-gradient(#f6f6f6,#e2e2e2)"></div>
<svg class="a" style="left:937px;top:165px" width="11" height="9"><path d="M9.5 1.2H2.2V7.8H9.5" fill="none" stroke="#999" stroke-width="0.7"/><path d="M4 4.5H9.5" stroke="#111" stroke-width="0.9"/><circle cx="4.5" cy="4.5" r="1.1" fill="#111"/></svg>
<div class="t" style="left:895px;top:178px;color:#222;"><span style="display:inline-block;width:2em">边角</span>:</div>
<div class="a" style="left:911px;top:178px;width:37px;height:10px;background:#8e8e8e;border-radius:1px"></div>
<div class="a" style="left:912px;top:179px;width:11px;height:8px;background:#a6a6a6"></div>
<svg class="a" style="left:912px;top:179px" width="11" height="8"><path d="M2.5 8V1.5H9.5" fill="none" stroke="#ddd" stroke-width="0.8"/><path d="M4 3H9.5M4 3V8" fill="none" stroke="#777" stroke-width="0.5"/><path d="M5.5 3.5V7.5M8 5V7.5" stroke="#111" stroke-width="0.8"/><circle cx="5.5" cy="3.8" r="1.1" fill="#111"/></svg>
<div class="a" style="left:924px;top:179px;width:11px;height:8px;background:linear-gradient(#f6f6f6,#e2e2e2)"></div>
<svg class="a" style="left:925px;top:179px" width="11" height="8"><path d="M1.8 8V4A2.8 2.8 0 0 1 4.6 1.2H9.5" fill="none" stroke="#999" stroke-width="0.7"/><rect x="3.5" y="3" width="6" height="4.5" fill="#bbb" opacity="0.5"/><path d="M5.5 3.5V7.5" stroke="#111" stroke-width="0.8"/><circle cx="5.5" cy="3.8" r="1.1" fill="#111"/></svg>
<div class="a" style="left:936px;top:179px;width:11px;height:8px;background:linear-gradient(#f6f6f6,#e2e2e2)"></div>
<svg class="a" style="left:937px;top:179px" width="11" height="8"><path d="M1.8 8V4L4.6 1.2H9.5" fill="none" stroke="#999" stroke-width="0.7"/><rect x="3.5" y="3" width="6" height="4.5" fill="#bbb" opacity="0.5"/><path d="M5.5 3.5V7.5" stroke="#111" stroke-width="0.8"/><circle cx="5.5" cy="3.8" r="1.1" fill="#111"/></svg>
<div class="t" style="left:956px;top:178px;color:#222;"><span style="display:inline-block;width:2em">限制</span>:</div>
<div class="a" style="left:972px;top:178px;width:21px;height:10px;background:#fff;border:1px solid #8c8c8c"></div>
<div class="t" style="left:974.5px;top:178.8px;color:#222;font-size:6.5px">10</div>
<div class="t" style="left:994px;top:177.5px;color:#222;font-size:6.5px;font-weight:bold">x</div>
<div class="t" style="left:883px;top:191.5px;color:#222;"><span style="display:inline-block;width:4em">对齐描边</span>:</div>
<div class="a" style="left:911px;top:191.5px;width:37px;height:10px;background:#8e8e8e;border-radius:1px"></div>
<div class="a" style="left:912px;top:192.5px;width:11px;height:8px;background:#a6a6a6"></div>
<svg class="a" style="left:912px;top:192px" width="11" height="9"><path d="M3 1V8" stroke="#555" stroke-width="0.6"/><path d="M4.5 1V8M4.5 5H9.5M4.5 7.5H9.5" fill="none" stroke="#eee" stroke-width="0.6"/><path d="M3.8 1V6.5" stroke="#111" stroke-width="0.9"/><circle cx="3.8" cy="6.8" r="1.2" fill="#111"/></svg>
<div class="a" style="left:924px;top:192.5px;width:11px;height:8px;background:linear-gradient(#f6f6f6,#e2e2e2)"></div>
<svg class="a" style="left:925px;top:192px" width="11" height="9"><path d="M3.5 1V8M3.5 5H9.5M3.5 7.5H9.5" fill="none" stroke="#bbb" stroke-width="0.6"/></svg>
<div class="a" style="left:936px;top:192.5px;width:11px;height:8px;background:linear-gradient(#f6f6f6,#e2e2e2)"></div>
<svg class="a" style="left:937px;top:192px" width="11" height="9"><path d="M5 1V7.5M2 7.5H9.5M5 5H9.5" fill="none" stroke="#bbb" stroke-width="0.6"/></svg>
<div class="a" style="left:882px;top:205px;width:115px;height:1px;background:#bcbcbc;border-bottom:1px solid #e6e6e6"></div>
<div class="a" style="left:882.5px;top:210.5px;width:6.5px;height:6.5px;background:linear-gradient(#fafafa,#e0e0e0);border:1px solid #9a9a9a;border-radius:1px"></div>
<div class="t" style="left:891.5px;top:209px;color:#222;"><span style="display:inline-block;width:2em">虚线</span></div>
<div class="a" style="left:955px;top:209px;width:42px;height:10.5px;background:linear-gradient(#f2f2f2,#e2e2e2);border:1px solid #b8b8b8;border-radius:1px"></div>
<div class="a" style="left:975.5px;top:210px;width:1px;height:9px;background:#b8b8b8"></div>
<svg class="a" style="left:955px;top:209px" width="42" height="11"><g fill="none" stroke="#999" stroke-width="0.8"><path d="M3.5 2.5H11M13 2.5H17.5M3.5 3.5V6.5M17.5 2.5V5.5M4 7.5H8M10 7.5H17"/><path d="M24.5 5V2.5H26.5M29 2.5H35M37.5 2.5H39.5V5M24.5 5.5V7.5H26.5M29 7.5H35M37.5 7.5H39.5V5.5"/></g></svg>
<div class="a" style="left:883px;top:223px;width:18px;height:10px;background:#e6e6e6;border:1px solid #b8b8b8"></div>
<div class="a" style="left:902px;top:223px;width:18px;height:10px;background:#e6e6e6;border:1px solid #b8b8b8"></div>
<div class="a" style="left:921px;top:223px;width:18px;height:10px;background:#e6e6e6;border:1px solid #b8b8b8"></div>
<div class="a" style="left:940px;top:223px;width:18px;height:10px;background:#e6e6e6;border:1px solid #b8b8b8"></div>
<div class="a" style="left:959px;top:223px;width:18px;height:10px;background:#e6e6e6;border:1px solid #b8b8b8"></div>
<div class="a" style="left:978px;top:223px;width:18px;height:10px;background:#e6e6e6;border:1px solid #b8b8b8"></div>
<div class="t" style="left:886px;top:232px;color:#bdbdbd;font-size:5.5px"><span style="display:inline-block;width:2em">虚线</span></div>
<div class="t" style="left:905px;top:232px;color:#bdbdbd;font-size:5.5px"><span style="display:inline-block;width:2em">间隙</span></div>
<div class="t" style="left:924px;top:232px;color:#bdbdbd;font-size:5.5px"><span style="display:inline-block;width:2em">虚线</span></div>
<div class="t" style="left:943px;top:232px;color:#bdbdbd;font-size:5.5px"><span style="display:inline-block;width:2em">间隙</span></div>
<div class="t" style="left:962px;top:232px;color:#bdbdbd;font-size:5.5px"><span style="display:inline-block;width:2em">虚线</span></div>
<div class="t" style="left:981px;top:232px;color:#bdbdbd;font-size:5.5px"><span style="display:inline-block;width:2em">间隙</span></div>
<div class="a" style="left:882px;top:242px;width:115px;height:1px;background:#bcbcbc;border-bottom:1px solid #e6e6e6"></div>
<div class="t" style="left:895px;top:247px;color:#222;"><span style="display:inline-block;width:2em">箭头</span>:</div>
<div class="a" style="left:911px;top:247px;width:30px;height:10.5px;background:#fff;border:1px solid #8c8c8c;border-radius:1px"></div>
<div class="a" style="left:932px;top:248px;width:8px;height:8.5px;background:linear-gradient(#f4f4f4,#d8d8d8);border-left:1px solid #aaa"></div>
<div class="a" style="left:934px;top:251.25px;border-left:2px solid transparent;border-right:2px solid transparent;border-top:3px solid #111"></div>
<div class="a" style="left:915px;top:252px;width:15px;height:1px;background:#444"></div>
<div class="a" style="left:947px;top:247px;width:30px;height:10.5px;background:#fff;border:1px solid #8c8c8c;border-radius:1px"></div>
<div class="a" style="left:968px;top:248px;width:8px;height:8.5px;background:linear-gradient(#f4f4f4,#d8d8d8);border-left:1px solid #aaa"></div>
<div class="a" style="left:970px;top:251.25px;border-left:2px solid transparent;border-right:2px solid transparent;border-top:3px solid #111"></div>
<div class="a" style="left:951px;top:252px;width:15px;height:1px;background:#444"></div>
<svg class="a" style="left:986px;top:249px" width="9" height="8"><path d="M1 2.5H8M6 1L8 2.5L6 4M8 5.5H1M3 4L1 5.5L3 7" fill="none" stroke="#888" stroke-width="0.6"/></svg>
<div class="t" style="left:895px;top:262.5px;color:#bbb;"><span style="display:inline-block;width:2em">缩放</span>:</div>
<div class="a" style="left:911px;top:263px;width:30px;height:10px;background:#e6e6e6;border:1px solid #a8a8a8;border-radius:1px"></div>
<div class="a" style="left:912px;top:264px;width:9px;height:8px;background:linear-gradient(#f4f4f4,#e0e0e0);border-right:1px solid #a8a8a8"></div>
<div class="a" style="left:912px;top:267.5px;width:8px;height:1px;background:#c8c8c8"></div>
<svg class="a" style="left:912px;top:264px" width="9" height="8"><path d="M2.6 3.0L4.5 1.0L6.4 3.0Z M2.6 5.0L4.5 7.0L6.4 5.0Z" fill="#aaa"/></svg>
<div class="t" style="left:922px;top:263.8px;color:#999;font-weight:normal;font-size:6px;letter-spacing:-0.1px">100%</div>
<div class="a" style="left:947px;top:263px;width:30px;height:10px;background:#e6e6e6;border:1px solid #a8a8a8;border-radius:1px"></div>
<div class="a" style="left:948px;top:264px;width:9px;height:8px;background:linear-gradient(#f4f4f4,#e0e0e0);border-right:1px solid #a8a8a8"></div>
<div class="a" style="left:948px;top:267.5px;width:8px;height:1px;background:#c8c8c8"></div>
<svg class="a" style="left:948px;top:264px" width="9" height="8"><path d="M2.6 3.0L4.5 1.0L6.4 3.0Z M2.6 5.0L4.5 7.0L6.4 5.0Z" fill="#aaa"/></svg>
<div class="t" style="left:958px;top:263.8px;color:#999;font-weight:normal;font-size:6px;letter-spacing:-0.1px">100%</div>
<svg class="a" style="left:985px;top:264px" width="10" height="9"><path d="M3 2A2 2 0 0 1 7 2V3.5M3 5.5V7A2 2 0 0 0 7 7V5.5M3 3.5V2" fill="none" stroke="#aaa" stroke-width="0.7"/><path d="M0 4.5H2M8 4.5H10M1 2L2 3M9 2L8 3M1 7L2 6M9 7L8 6" stroke="#bbb" stroke-width="0.5"/></svg>
<div class="t" style="left:895px;top:278px;color:#bbb;"><span style="display:inline-block;width:2em">对齐</span>:</div>
<div class="a" style="left:911px;top:278.5px;width:25px;height:10px;background:linear-gradient(#f0f0f0,#e2e2e2);border:1px solid #b8b8b8"></div>
<div class="a" style="left:923.5px;top:279px;width:1px;height:9px;background:#b8b8b8"></div>
<svg class="a" style="left:912px;top:279px" width="24" height="9"><g fill="none" stroke="#999" stroke-width="0.7"><path d="M2 4.5H9M7 2.5L9 4.5L7 6.5M6 1.5H10"/><path d="M14 4.5H21M19 2.5L21 4.5L19 6.5M14 1.5H22"/></g></svg>
<div class="a" style="left:882px;top:291px;width:115px;height:1px;background:#bcbcbc;border-bottom:1px solid #e6e6e6"></div>
<div class="t" style="left:882.5px;top:296px;color:#222;"><span style="display:inline-block;width:4em">配置文件</span>:</div>
<div class="a" style="left:911px;top:296px;width:58px;height:10.5px;background:#fff;border:1px solid #8c8c8c;border-radius:1px"></div>
<div class="a" style="left:960px;top:297px;width:8px;height:8.5px;background:linear-gradient(#f4f4f4,#d8d8d8);border-left:1px solid #aaa"></div>
<div class="a" style="left:962px;top:300.25px;border-left:2px solid transparent;border-right:2px solid transparent;border-top:3px solid #111"></div>
<div class="a" style="left:915px;top:300.3px;width:27px;height:2px;background:#555"></div><div class="t" style="left:945px;top:296px;color:#222;"><span style="display:inline-block;width:2em">等比</span></div>
<svg class="a" style="left:973px;top:298px" width="9" height="8"><path d="M1 1V7L4 4Z M8 1V7L5 4Z" fill="none" stroke="#bbb" stroke-width="0.7"/></svg>
<svg class="a" style="left:986px;top:298px" width="8" height="8"><path d="M1 1H7L4 3.5Z M1 7H7L4 4.5Z" fill="none" stroke="#bbb" stroke-width="0.7"/></svg>
<div class="a" style="left:880px;top:310px;width:120px;height:2px;background:#8e8e8e"></div>
<!-- /PANEL2 -->
<!-- PANEL3 -->
<div class="a" style="left:880px;top:312px;width:120px;height:9px;background:linear-gradient(#a6a6a6,#9c9c9c)"></div>
<div class="a" style="left:880px;top:312px;width:20px;height:9px;background:#a9a9a9;border:1px solid #969696;border-left-color:#b4b4b4;border-top:none"></div>
<div class="t" style="left:883.5px;top:312.0px;color:#333"><span style="display:inline-block;width:2em">字符</span></div>
<div class="a" style="left:900px;top:312px;width:21px;height:9px;background:#a9a9a9;border:1px solid #969696;border-left-color:#b4b4b4;border-top:none"></div>
<div class="t" style="left:903.5px;top:312.0px;color:#333"><span style="display:inline-block;width:2em">色板</span></div>
<div class="a" style="left:921px;top:312px;width:29px;height:10px;background:#dadada"></div>
<svg class="a" style="left:923px;top:313.5px" width="4" height="6"><path d="M0.3 2.3L2 0.5L3.7 2.3ZM0.3 3.7L2 5.5L3.7 3.7Z" fill="#444"/></svg>
<div class="t" style="left:927px;top:312.0px;color:#222"><span style="display:inline-block;width:3em">透明度</span></div>
<div class="a" style="left:990px;top:315.5px;border-left:1.5px solid transparent;border-right:1.5px solid transparent;border-top:2px solid #222"></div>
<div class="a" style="left:993px;top:314.0px;width:4px;height:5px;background:#8a8a8a"></div>
<div class="a" style="left:883px;top:325px;width:45px;height:10px;background:linear-gradient(#fdfdfd,#e2e2e2);border:1px solid #9a9a9a;border-radius:1px"></div>
<div class="a" style="left:917.5px;top:326px;width:1px;height:8px;background:#d0d0d0"></div>
<div class="a" style="left:920.5px;top:329px;border-left:2px solid transparent;border-right:2px solid transparent;border-top:3px solid #111"></div>
<div class="t" style="left:887px;top:325px;color:#222;"><span style="display:inline-block;width:2em">正常</span></div>
<div class="t" style="left:936px;top:325px;color:#222;"><span style="display:inline-block;width:4em">不透明度</span>:</div>
<div class="a" style="left:964.5px;top:325px;width:32px;height:10px;background:#fff;border:1px solid #8c8c8c;border-radius:1px"></div>
<div class="a" style="left:988px;top:326px;width:8px;height:8px;background:linear-gradient(#f4f4f4,#d8d8d8);border-left:1px solid #aaa"></div>
<div class="a" style="left:990px;top:329px;border-left:2px solid transparent;border-right:2px solid transparent;border-top:3px solid #111"></div>
<div class="t" style="left:966.5px;top:325px;color:#222;font-size:6px;letter-spacing:-0.3px">100%</div>
<div class="a" style="left:882px;top:338px;width:115px;height:1px;background:#bcbcbc;border-bottom:1px solid #e6e6e6"></div>
<div class="a" style="left:883px;top:343px;width:69px;height:29px;background:#d2d2d2;border:1px solid #8a8a8a"></div>
<div class="a" style="left:883.5px;top:343.5px;width:27px;height:28px;background:#fff;border:1.5px solid #777"></div>
<svg class="a" style="left:884px;top:344px" width="26" height="27"><path d="M0.5 8A12.5 9.5 0 0 0 25.5 8" fill="none" stroke="#8a8a8a" stroke-width="0.7"/></svg>
<div class="a" style="left:924px;top:343.5px;width:28px;height:28px;background:#d8d8d8;border:1.5px solid #7a7a7a"></div>
<svg class="a" style="left:931px;top:351px" width="13" height="13"><circle cx="6.5" cy="6.5" r="4.7" fill="none" stroke="#4a4a4a" stroke-width="1.7"/><path d="M3.3 3.3L9.7 9.7" stroke="#4a4a4a" stroke-width="1.7"/></svg>
<div class="a" style="left:954.5px;top:342px;width:36px;height:10.5px;background:linear-gradient(#fcfcfc,#e4e4e4);border:1px solid #9a9a9a;border-radius:1px"></div>
<div class="t" style="left:960px;top:342.3px;color:#111;"><span style="display:inline-block;width:4em">制作蒙版</span></div>
<div class="a" style="left:954px;top:356px;width:6.5px;height:6.5px;border:1px solid #c0c0c0;border-radius:1px;background:#dedede"></div>
<div class="t" style="left:963px;top:354.5px;color:#bdbdbd;"><span style="display:inline-block;width:2em">剪切</span></div>
<div class="a" style="left:954px;top:366px;width:6.5px;height:6.5px;border:1px solid #c0c0c0;border-radius:1px;background:#dedede"></div>
<div class="t" style="left:963px;top:364.5px;color:#bdbdbd;"><span style="display:inline-block;width:4em">反相蒙版</span></div>
<div class="a" style="left:880px;top:376px;width:120px;height:2px;background:#8e8e8e"></div>
<div class="a" style="left:880px;top:378px;width:120px;height:9.5px;background:linear-gradient(#a6a6a6,#9c9c9c)"></div>
<div class="a" style="left:880px;top:378px;width:23px;height:9.5px;background:#a9a9a9;border:1px solid #969696;border-left-color:#b4b4b4;border-top:none"></div>
<div class="t" style="left:883.5px;top:378.25px;color:#333"><span style="display:inline-block;width:3em">分色预</span></div>
<div class="a" style="left:903px;top:378px;width:17px;height:9.5px;background:#a9a9a9;border:1px solid #969696;border-left-color:#b4b4b4;border-top:none"></div>
<div class="t" style="left:906.5px;top:378.25px;color:#333"><span style="display:inline-block;width:2em">外观</span></div>
<div class="a" style="left:920px;top:378px;width:17px;height:9.5px;background:#a9a9a9;border:1px solid #969696;border-left-color:#b4b4b4;border-top:none"></div>
<div class="t" style="left:923.5px;top:378.25px;color:#333"><span style="display:inline-block;width:2em">图层</span></div>
<div class="a" style="left:937px;top:378px;width:19px;height:10.5px;background:#dadada"></div>
<div class="t" style="left:940px;top:378.25px;color:#222"><span style="display:inline-block;width:2em">画板</span></div>
<div class="a" style="left:956px;top:378px;width:21px;height:9.5px;background:#a9a9a9;border:1px solid #969696;border-left-color:#b4b4b4;border-top:none"></div>
<div class="t" style="left:959.5px;top:378.25px;color:#333"><span style="display:inline-block;width:2em">属性</span></div>
<div class="a" style="left:990px;top:381.75px;border-left:1.5px solid transparent;border-right:1.5px solid transparent;border-top:2px solid #222"></div>
<div class="a" style="left:993px;top:380.25px;width:4px;height:5px;background:#8a8a8a"></div>
<div class="a" style="left:882px;top:390px;width:115px;height:60px;background:#d8d8d8;border:1px solid #9c9c9c"></div>
<div class="a" style="left:883px;top:391px;width:113px;height:10px;background:#c4d8f4;border-bottom:1px solid #94a8c8"></div>
<div class="a" style="left:898px;top:391px;width:1px;height:10px;background:#a4b4cc"></div>
<div class="a" style="left:975.5px;top:391px;width:1px;height:10px;background:#a4b4cc"></div>
<div class="t" style="left:885.5px;top:390.5px;color:#333;font-size:5.5px">1</div>
<div class="t" style="left:902px;top:390.5px;color:#222;"><span style="display:inline-block;width:2em">画板</span> 1</div>
<svg class="a" style="left:978px;top:392px" width="10" height="8"><path d="M0 2.3H10M0 6H10M2.5 0V8M7.5 0V8" stroke="#9aa" stroke-width="0.5"/><rect x="2.5" y="2.3" width="5" height="3.7" fill="#fff" stroke="#333" stroke-width="0.8"/></svg>
<!-- /PANEL3 -->

</body></html>
